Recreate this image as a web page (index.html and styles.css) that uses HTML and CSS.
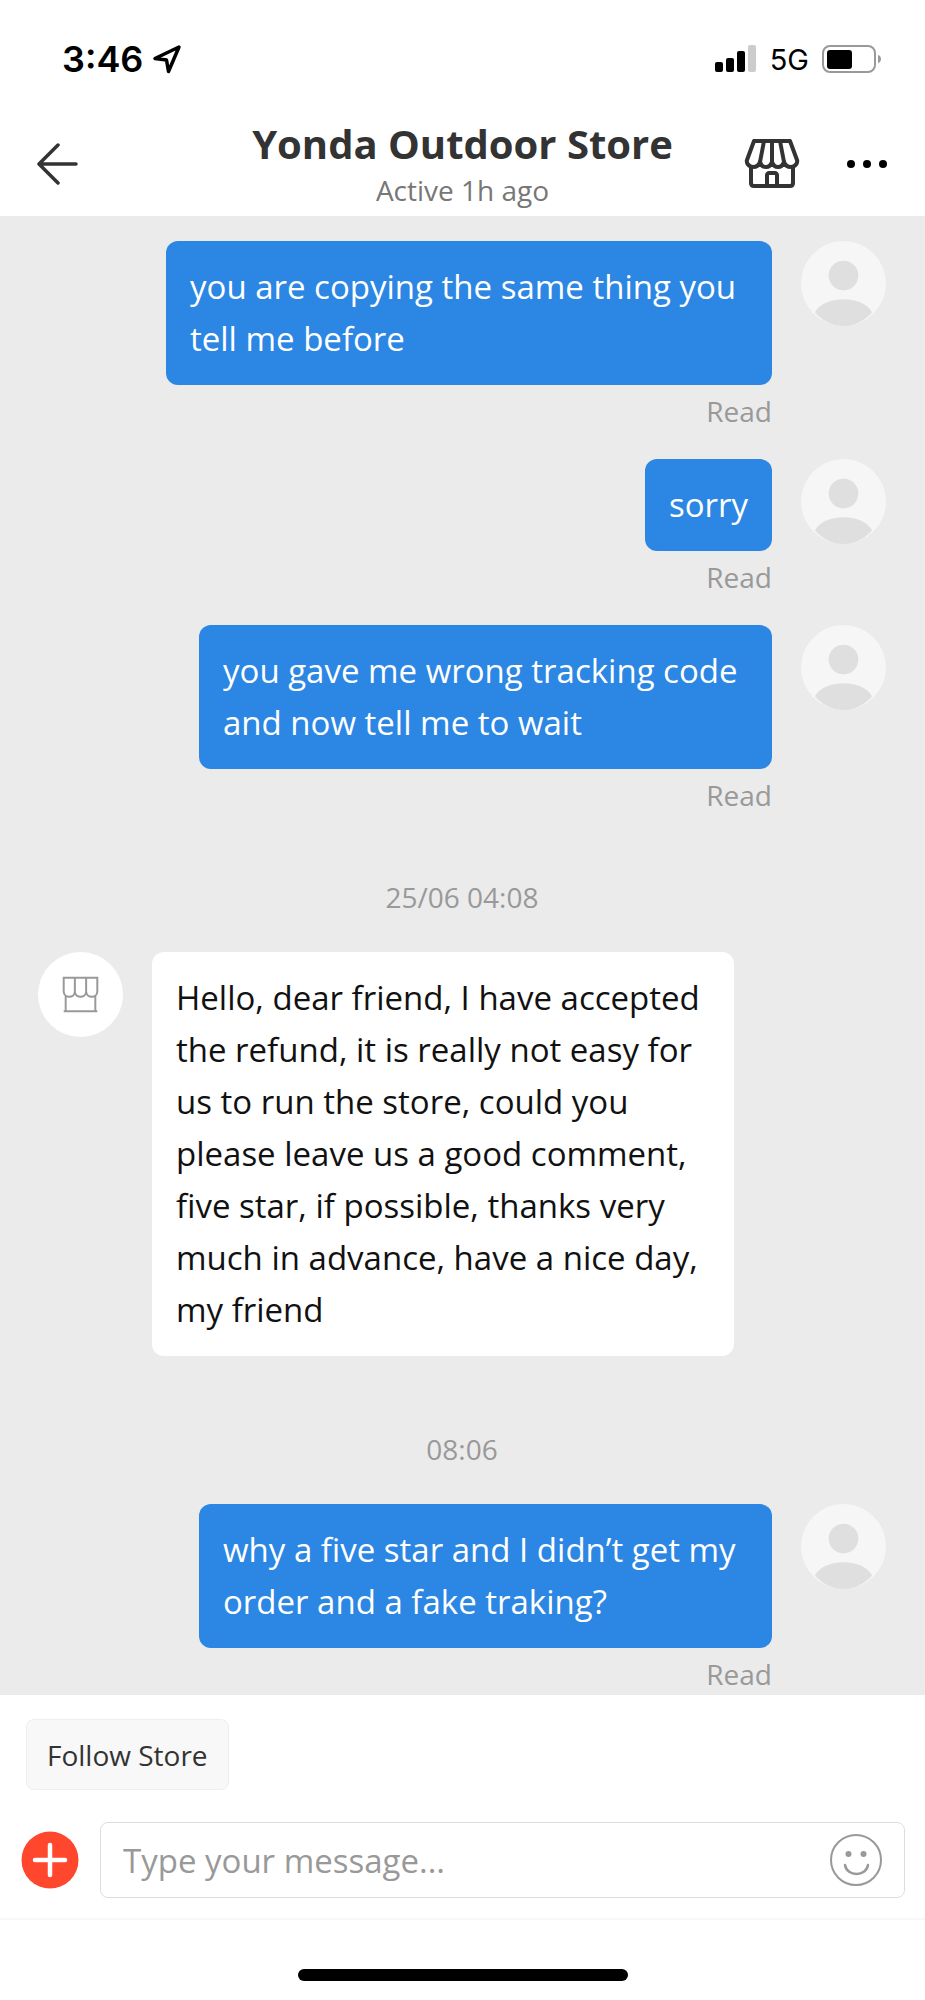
FILE: index.html
```html
<!DOCTYPE html>
<html lang="en">
<head>
<meta charset="utf-8">
<meta name="viewport" content="width=device-width, initial-scale=1">
<title>Yonda Outdoor Store</title>
<link rel="stylesheet" href="styles.css">
</head>
<body>
<svg class="sprite" aria-hidden="true">
  <symbol id="person" viewBox="0 0 86 86">
    <circle cx="43" cy="43" r="43" fill="#f6f6f6"/>
    <circle cx="43" cy="35" r="15" fill="#dfdfdf"/>
    <path d="M14 72C20 63 31 59 43 59s23 4 29 13C64 81 54 86 43 86S22 81 14 72z" fill="#dfdfdf"/>
  </symbol>
</svg>
<div class="app">
  <div class="status">
    <div class="status-left">
      <span class="clock">3:46</span>
      <svg width="30" height="30" viewBox="0 0 30 30" fill="none" stroke="#000" stroke-width="3.500" stroke-linejoin="round"><path d="M27 3L3 14.500l11.500 1.500L16.500 27.500z"/></svg>
    </div>
    <div class="status-right">
      <svg width="42" height="28" viewBox="0 0 42 28"><rect x="0" y="17" width="8" height="10" rx="2"/><rect x="11" y="13" width="8" height="14" rx="2"/><rect x="22" y="6" width="8" height="21" rx="2"/><rect x="33" y="0" width="8" height="27" rx="2" fill="#ccc"/></svg>
      <span class="network">5G</span>
      <svg width="60" height="28" viewBox="0 0 60 28"><rect x="1" y="1" width="52" height="26" rx="7" fill="none" stroke="#999" stroke-width="2"/><rect x="5" y="5" width="25" height="19" rx="3"/><path d="M56 10c4 1 4 7 0 8z" fill="#999"/></svg>
    </div>
  </div>

  <header class="header">
    <button class="icon-button" aria-label="Back">
      <svg width="42" height="44" viewBox="0 0 42 44" fill="none" stroke="#333" stroke-width="3.500" stroke-linecap="round" stroke-linejoin="round"><path d="M21 3L2 22l19 19M2 22h37"/></svg>
    </button>
    <div class="heading">
      <h1 class="title">Yonda Outdoor Store</h1>
      <p class="subtitle">Active 1h ago</p>
    </div>
    <div class="actions">
      <button class="icon-button" aria-label="Visit store">
        <svg width="56" height="50" viewBox="0 0 56 50" fill="none" stroke="#333" stroke-width="4" stroke-linejoin="round"><path d="M10 2h36l7 19c1 3-2 7-6 7-3 0-6-2-7-5-1 3-3 5-6 5s-5-2-6-5c-1 3-3 5-6 5s-5-2-6-5c-1 3-4 5-7 5-4 0-7-4-6-7z"/><path d="M20 2l-4 21M28 2v21M36 2l4 21M7 28v16c0 2 1 3 3 3h36c2 0 3-1 3-3V28M23 47V36c0-1 1-2 2-2h6c1 0 2 1 2 2v11"/></svg>
      </button>
      <button class="icon-button" aria-label="More options">
        <svg width="42" height="10" viewBox="0 0 42 10"><circle cx="5" cy="5" r="4"/><circle cx="21" cy="5" r="4"/><circle cx="37" cy="5" r="4"/></svg>
      </button>
    </div>
  </header>

  <main class="chat">
    <div class="message message-out">
      <div class="content">
        <p class="bubble bubble-wide">you are copying the same thing you tell me before</p>
        <span class="receipt">Read</span>
      </div>
      <svg class="avatar"><use href="#person"/></svg>
    </div>
    <div class="message message-out">
      <div class="content">
        <p class="bubble">sorry</p>
        <span class="receipt">Read</span>
      </div>
      <svg class="avatar"><use href="#person"/></svg>
    </div>
    <div class="message message-out">
      <div class="content">
        <p class="bubble">you gave me wrong tracking code and now tell me to wait</p>
        <span class="receipt">Read</span>
      </div>
      <svg class="avatar"><use href="#person"/></svg>
    </div>
    <time class="stamp">25/06 04:08</time>
    <div class="message message-in">
      <svg class="avatar" viewBox="0 0 86 86"><circle cx="43" cy="43" r="43" fill="#fff"/><g fill="none" stroke="#999" stroke-width="2"><path d="M26 26h34v14c0 7-11 7-11.300 0 0 7-11.400 7-11.400 0 0 7-11.300 7-11.300 0zM37.300 26v14M48.700 26v14M28 45v14M58 45v14M26 60h34"/></g></svg>
      <div class="content">
        <p class="bubble">Hello, dear friend, I have accepted the refund, it is really not easy for us to run the store, could you please leave us a good comment, five star, if possible, thanks very much in advance, have a nice day, my friend</p>
      </div>
    </div>
    <time class="stamp">08:06</time>
    <div class="message message-out">
      <div class="content">
        <p class="bubble">why a five star and I didn’t get my order and a fake traking?</p>
        <span class="receipt">Read</span>
      </div>
      <svg class="avatar"><use href="#person"/></svg>
    </div>
  </main>

  <footer class="footer">
    <div class="quick">
      <button class="follow">Follow Store</button>
    </div>
    <form class="composer">
      <button class="icon-button" type="button" aria-label="Add attachment">
        <svg width="58" height="58" viewBox="0 0 58 58"><circle cx="29" cy="29" r="28.500" fill="#ff472e"/><path d="M14 29h30M29 14v30" stroke="#fff" stroke-width="4.500" stroke-linecap="round"/></svg>
      </button>
      <div class="field">
        <input class="input" type="text" placeholder="Type your message..." aria-label="Type your message">
        <button class="icon-button" type="button" aria-label="Emoji">
          <svg width="52" height="52" viewBox="0 0 52 52"><circle cx="26" cy="26" r="25" fill="none" stroke="#999" stroke-width="2"/><circle cx="18.500" cy="20" r="3" fill="#999"/><circle cx="33.500" cy="20" r="3" fill="#999"/><path d="M15 31c2 12 21 12 23 0" fill="none" stroke="#999" stroke-width="2.500" stroke-linecap="round"/></svg>
        </button>
      </div>
    </form>
    <div class="home"><span class="home-bar"></span></div>
  </footer>
</div>
</body>
</html>
```

FILE: styles.css
```css
* {
  box-sizing: border-box;
}

body {
  margin: 0;
  background: #fff;
  color: #333;
  font-family: "Open Sans", "Noto Sans", sans-serif;
}

h1,
p {
  margin: 0;
}

svg {
  display: block;
  flex: none;
}

button,
input {
  border: 0;
  margin: 0;
  padding: 0;
  background: none;
  color: inherit;
  font: inherit;
}

.sprite {
  position: absolute;
  width: 0;
  height: 0;
}

.app {
  display: flex;
  flex-direction: column;
  min-height: 100vh;
}

.status {
  display: flex;
  align-items: center;
  justify-content: space-between;
  height: 118px;
  padding: 0 43px 0 62px;
  color: #000;
  font-family: Inter, sans-serif;
}

.status-left {
  display: flex;
  align-items: center;
  gap: 9px;
}

.status-right {
  display: flex;
  align-items: center;
  gap: 13px;
}

.clock {
  font-size: 36px;
  font-weight: 600;
}

.network {
  font-size: 29px;
  font-weight: 400;
}

.header {
  display: grid;
  grid-template-columns: 1fr auto 1fr;
  align-items: center;
  height: 98px;
  padding: 0 37px 6px;
}

.icon-button {
  display: flex;
  flex: none;
  justify-self: start;
  cursor: pointer;
}

.heading {
  text-align: center;
}

.title {
  font-size: 40px;
  font-weight: 700;
  line-height: 52px;
}

.subtitle {
  color: #777;
  font-size: 28px;
  line-height: 40px;
}

.actions {
  display: flex;
  align-items: center;
  justify-content: flex-end;
  gap: 46px;
}

.chat {
  display: flex;
  flex: 1;
  flex-direction: column;
  gap: 28px;
  padding: 25px 39px 0 38px;
  background: #ebebeb;
}

.message {
  display: flex;
  align-items: flex-start;
  gap: 29px;
}

.message-out {
  justify-content: flex-end;
}

.message-in {
  margin-bottom: 11px;
}

.content {
  display: flex;
  flex-direction: column;
  align-items: flex-end;
}

.bubble {
  max-width: 573px;
  padding: 20px 24px;
  border-radius: 12px;
  background: #2c86e3;
  color: #fff;
  font-size: 33px;
  line-height: 52px;
}

.bubble-wide {
  max-width: 606px;
}

.message-in .bubble {
  max-width: 582px;
  background: #fff;
  color: #111;
}

.avatar {
  width: 85px;
  height: 85px;
}

.receipt {
  margin-top: 6px;
  color: #999;
  font-size: 28px;
  line-height: 40px;
}

.stamp {
  margin: 34px 0 7px;
  color: #999;
  font-size: 28px;
  line-height: 40px;
  text-align: center;
}

.quick {
  padding: 24px 26px 32px;
}

.follow {
  height: 71px;
  padding: 0 20px;
  border: 1px solid #eee;
  border-radius: 8px;
  background: #f8f8f8;
  font-size: 28px;
  cursor: pointer;
}

.composer {
  display: flex;
  align-items: center;
  gap: 21px;
  padding: 0 20px 20px 21px;
  border-bottom: 2px solid #f8f8f8;
}

.field {
  display: flex;
  flex: 1;
  align-items: center;
  height: 76px;
  padding: 0 22px;
  border: 1px solid #ddd;
  border-radius: 8px;
}

.input {
  flex: 1;
  min-width: 0;
  outline: 0;
  font-size: 33px;
}

.input::placeholder {
  color: #999;
  opacity: 1;
}

.home {
  display: flex;
  justify-content: center;
  padding: 49px 0 19px;
}

.home-bar {
  width: 330px;
  height: 12px;
  border-radius: 6px;
  background: #000;
}
```
